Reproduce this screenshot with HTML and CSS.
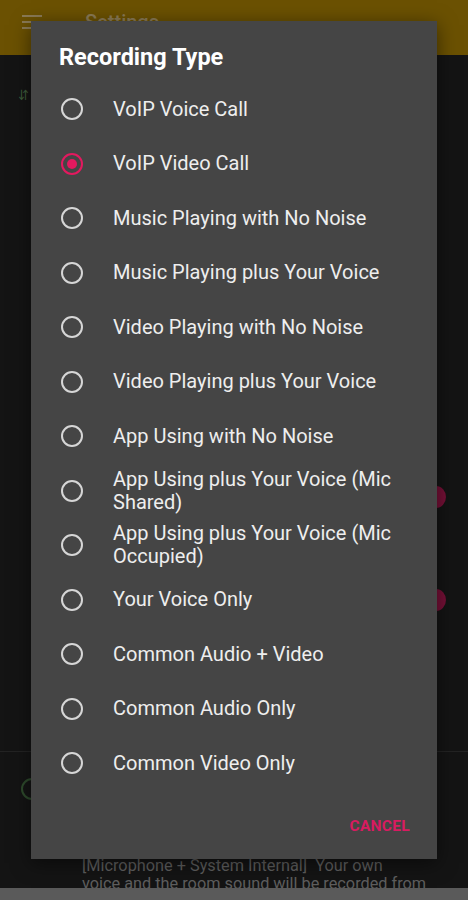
FILE: index.html
```html
<!DOCTYPE html>
<html lang="en">
<head>
	<meta charset="utf-8">
	<meta name="viewport" content="width=device-width, initial-scale=1.0">
	<title>Settings - Recording Type</title>
	<link rel="stylesheet" href="styles.css">
</head>
<body>
	<div class="screen">
		<header class="appbar">
			<span class="menu"><i></i><i></i><i></i></span>
			<span class="appbar-title">Settings</span>
		</header>
		<div class="settings">
			<div class="row row-top"><span class="g-icon">⇆</span></div>
			<div class="row row-toggle first"><span class="toggle"></span></div>
			<div class="row row-toggle"><span class="toggle"></span></div>
			<div class="row row-mode">
				<span class="g-ring"></span>
				<p class="mode-text">[Microphone + System Internal]&nbsp; Your own<br>voice and the room sound will be recorded from</p>
			</div>
		</div>
		<div class="navbar"></div>

		<div class="scrim">
			<div class="dialog">
				<h2 class="dialog-title">Recording Type</h2>
				<ul class="choices">
					<li><span class="radio"></span><span>VoIP Voice Call</span></li>
					<li class="on"><span class="radio"></span><span>VoIP Video Call</span></li>
					<li><span class="radio"></span><span>Music Playing with No Noise</span></li>
					<li><span class="radio"></span><span>Music Playing plus Your Voice</span></li>
					<li><span class="radio"></span><span>Video Playing with No Noise</span></li>
					<li><span class="radio"></span><span>Video Playing plus Your Voice</span></li>
					<li><span class="radio"></span><span>App Using with No Noise</span></li>
					<li><span class="radio"></span><span>App Using plus Your Voice (Mic Shared)</span></li>
					<li><span class="radio"></span><span>App Using plus Your Voice (Mic Occupied)</span></li>
					<li><span class="radio"></span><span>Your Voice Only</span></li>
					<li><span class="radio"></span><span>Common Audio + Video</span></li>
					<li><span class="radio"></span><span>Common Audio Only</span></li>
					<li><span class="radio"></span><span>Common Video Only</span></li>
				</ul>
				<div class="actions"><a class="cancel">CANCEL</a></div>
			</div>
		</div>
	</div>
</body>
</html>
```

FILE: styles.css
```css
body {
	margin: 0;
	background: #141414;
	font-family: Roboto, "Noto Sans", sans-serif;
}
.screen {
	position: relative;
	width: 468px;
	height: 900px;
	overflow: hidden;
	display: flex;
	flex-direction: column;
	background: #141414;
}
.appbar {
	height: 55px;
	flex: none;
	background: #6b5102;
	display: flex;
	align-items: center;
	padding: 0 0 0 22px;
	gap: 43px;
	box-sizing: border-box;
}
.menu {
	display: flex;
	flex-direction: column;
	gap: 4px;
	margin-top: -12px;
}
.menu i {
	display: block;
	width: 20px;
	height: 2px;
	background: #8a7a55;
}
.appbar-title {
	color: #8a7a55;
	font-size: 20px;
	font-weight: 500;
	margin-top: -12px;
}
.settings {
	flex: 1;
	display: flex;
	flex-direction: column;
}
.row {
	display: flex;
	align-items: center;
	padding: 0 0 0 18px;
}
.row-top {
	height: 80px;
}
.g-icon {
	color: #3d5a3a;
	font-size: 14px;
	transform: rotate(90deg);
}
.row-toggle {
	height: 20px;
	justify-content: flex-end;
	padding-right: 22px;
	margin-top: 83px;
}
.row-toggle.first {
	margin-top: 352px;
}
.toggle {
	width: 20px;
	height: 22px;
	border-radius: 50%;
	background: #751036;
}
.row-mode {
	margin-top: auto;
	border-top: 1px solid #232323;
	height: 137px;
	align-items: flex-start;
	gap: 40px;
	padding-top: 26px;
	box-sizing: border-box;
}
.g-ring {
	width: 18px;
	height: 18px;
	border: 2px solid #2e4a2c;
	border-radius: 50%;
	flex: none;
	margin-left: 3px;
}
.mode-text {
	margin: 79px 20px 0 -1px;
	color: #5e5e5e;
	font-size: 16.3px;
	line-height: 18px;
	white-space: nowrap;
}
.navbar {
	height: 12px;
	flex: none;
	background: #5a5a5a;
}
.scrim {
	position: absolute;
	inset: 0;
}
.dialog {
	position: absolute;
	left: 31px;
	top: 21px;
	width: 406px;
	height: 838px;
	background: #454545;
	box-sizing: border-box;
	padding: 22px 24px 0 30px;
	display: flex;
	flex-direction: column;
	box-shadow: 0 4px 18px rgba(0, 0, 0, .5);
}
.dialog-title {
	margin: 0 0 11px -2px;
	color: #fff;
	font-size: 23.5px;
	font-weight: 700;
	line-height: 28px;
}
.choices {
	list-style: none;
	margin: 0;
	padding: 0;
}
.choices li {
	height: 54.5px;
	display: flex;
	align-items: center;
	gap: 30px;
	color: #eee;
	font-size: 20px;
	line-height: 23px;
}
.radio {
	flex: none;
	width: 18px;
	height: 18px;
	border: 2px solid #d6d6d6;
	border-radius: 50%;
	display: flex;
	align-items: center;
	justify-content: center;
}
.on .radio {
	border-color: #e3195f;
}
.on .radio::after {
	content: "";
	width: 10px;
	height: 10px;
	border-radius: 50%;
	background: #e3195f;
}
.actions {
	display: flex;
	justify-content: flex-end;
	padding: 26px 3px 0 0;
}
.cancel {
	color: #d81b60;
	font-size: 15.5px;
	font-weight: 700;
	letter-spacing: .3px;
}
```
